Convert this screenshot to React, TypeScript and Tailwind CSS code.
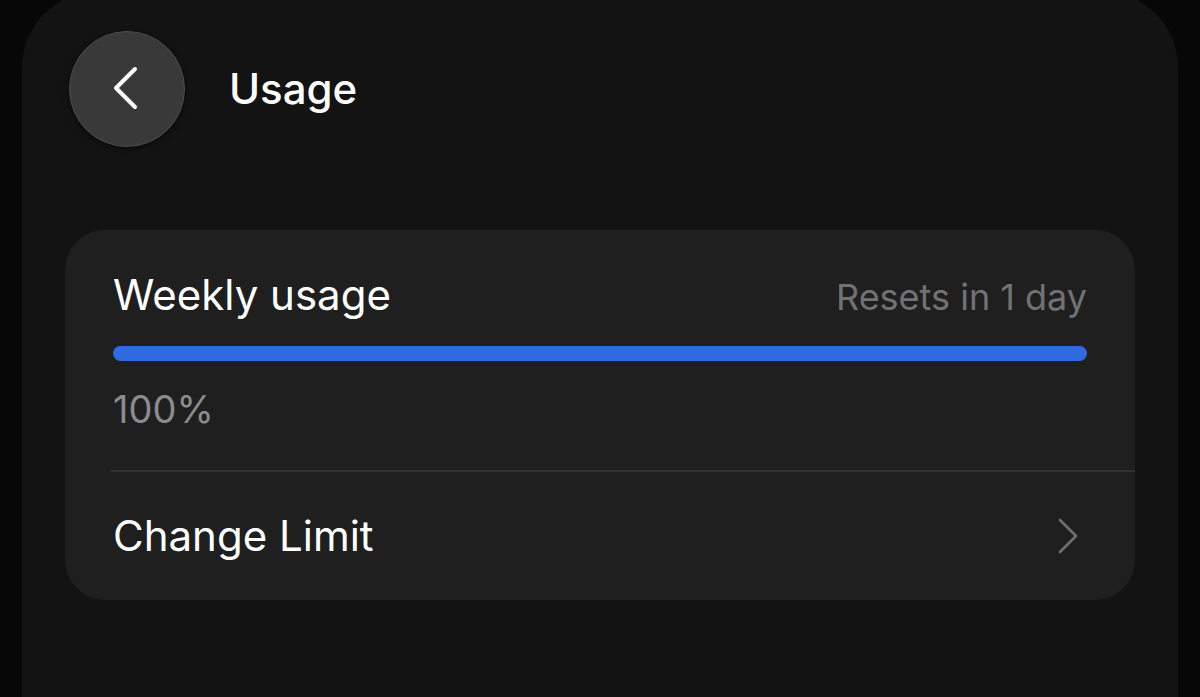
import React from "react";

function BackChevron() {
  return (
    <svg width="28" height="44" viewBox="0 0 28 44" fill="none">
      <polyline
        points="24,3 5,22 24,41"
        stroke="#ffffff"
        strokeWidth="4"
        strokeLinecap="round"
        strokeLinejoin="round"
      />
    </svg>
  );
}

function RowChevron() {
  return (
    <svg width="22" height="36" viewBox="0 0 22 36" fill="none">
      <polyline
        points="3,2 19,18 3,34"
        stroke="#6e6e70"
        strokeWidth="2.6"
        strokeLinecap="round"
        strokeLinejoin="round"
      />
    </svg>
  );
}

export default function App() {
  const percent = 100;

  return (
    <div className="h-screen w-full overflow-hidden bg-[#070707] px-[22px] font-['Inter','Liberation_Sans',sans-serif]">
      <div className="mt-[-8px] h-[720px] rounded-t-[75px] bg-[#131313] px-[43px]">
        {/* header */}
        <div className="flex items-center gap-[44px] pl-[4px] pt-[39px]">
          <button className="flex h-[116px] w-[116px] items-center justify-center rounded-full border border-[#4c4c4c] bg-[#393939] shadow-[0_2px_6px_rgba(0,0,0,0.5)]">
            <span className="ml-[-4px] mt-[-2px]">
              <BackChevron />
            </span>
          </button>
          <h1 className="text-[42px] font-medium leading-none text-white">Usage</h1>
        </div>

        {/* usage card */}
        <div className="mt-[83px] overflow-hidden rounded-[40px] bg-[#1f1f1f]">
          <div className="px-[48px] pt-[44px]">
            <div className="flex items-baseline justify-between">
              <span className="text-[42px] leading-none text-white">Weekly usage</span>
              <span className="text-[36px] leading-none text-[#727274]">Resets in 1 day</span>
            </div>
            <div className="mt-[30px] h-[15px] w-full rounded-full bg-[#333]">
              <div className="h-full rounded-full bg-[#2f6ae0]" style={{ width: `${percent}%` }} />
            </div>
            <div className="pb-[42px] pt-[29px] text-[38px] leading-none text-[#8c8c90]">{percent}%</div>
          </div>
          <div className="ml-[46px] h-[2px] bg-[#333335]" />
          <div className="flex h-[128px] items-center justify-between pl-[48px] pr-[56px]">
            <span className="text-[42px] leading-none text-white">Change Limit</span>
            <RowChevron />
          </div>
        </div>
      </div>
    </div>
  );
}
